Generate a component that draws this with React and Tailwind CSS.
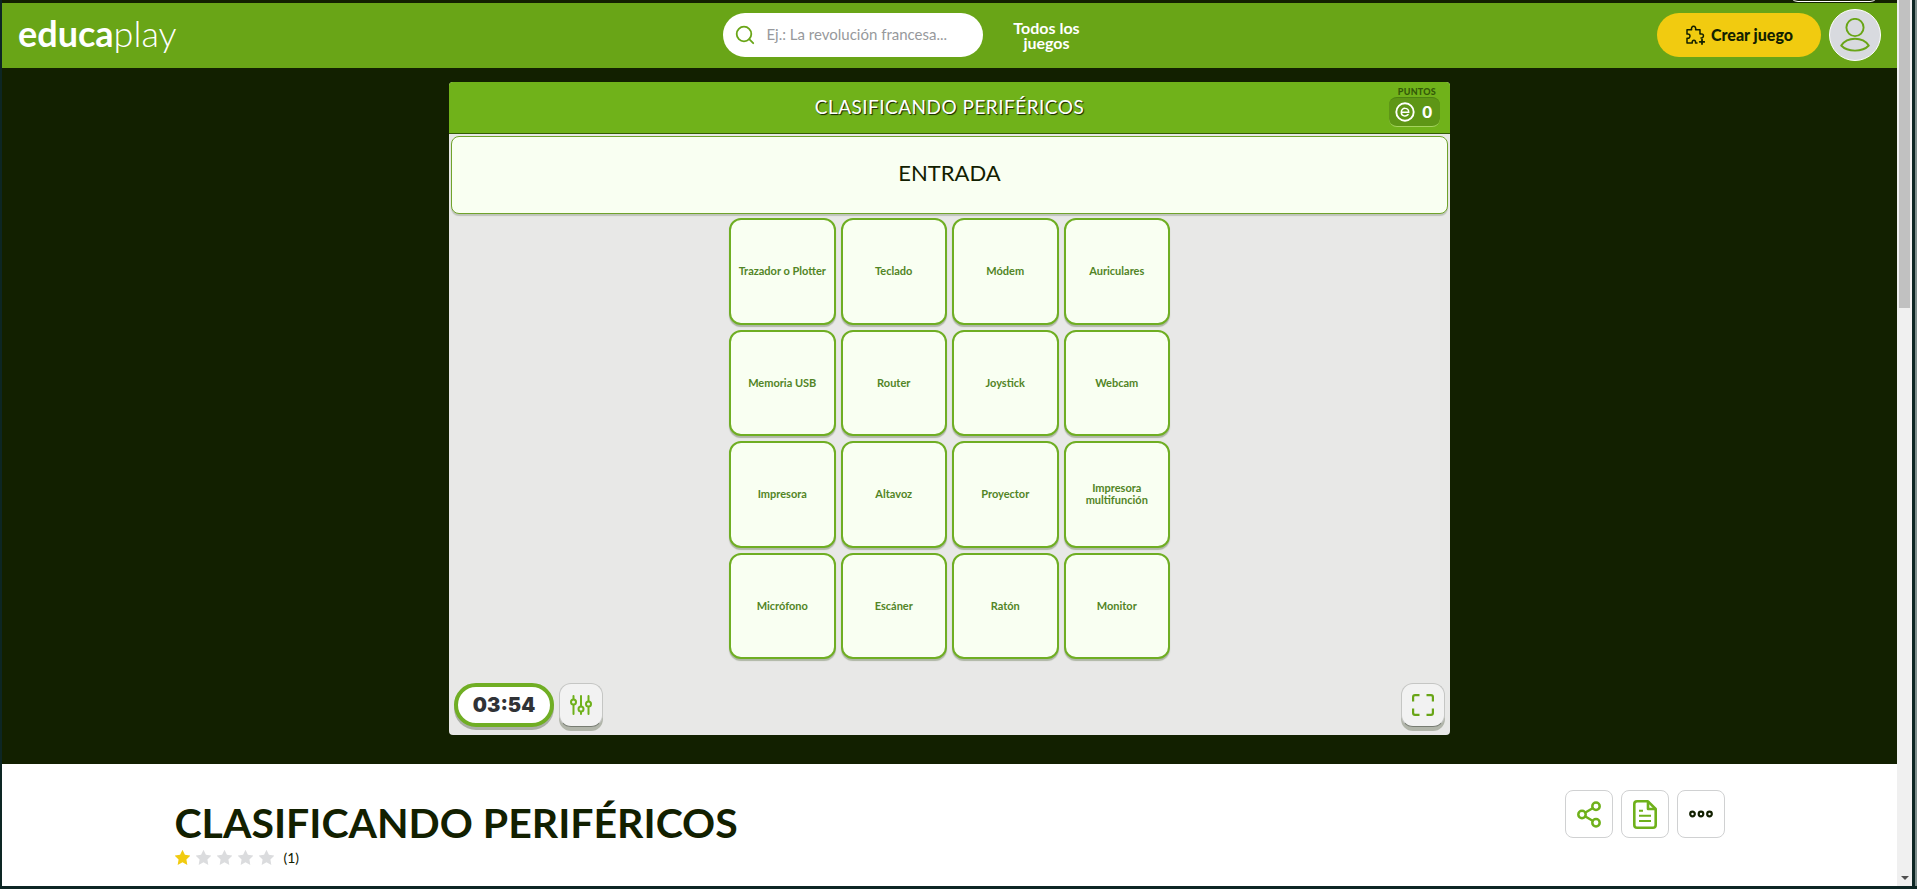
const tiles = [
  "Trazador o Plotter", "Teclado", "Módem", "Auriculares",
  "Memoria USB", "Router", "Joystick", "Webcam",
  "Impresora", "Altavoz", "Proyector", "Impresora multifunción",
  "Micrófono", "Escáner", "Ratón", "Monitor",
];

function SearchIcon() {
  return (
    <svg className="size-5 shrink-0" viewBox="0 0 20 20" fill="none" stroke="#69a517" strokeWidth="1.800" strokeLinecap="round" aria-hidden="true">
      <circle cx="9" cy="9" r="7.300" />
      <path d="M14.200 14.200l4 4" />
    </svg>
  );
}

function PuzzleIcon() {
  return (
    <svg className="size-5 shrink-0" viewBox="0 0 20 20" fill="none" stroke="#122000" strokeWidth="1.500" strokeLinejoin="round" strokeLinecap="round" aria-hidden="true">
      <path d="M12 18h-1.500c1-3.600-4.200-3.600-3.200 0H2v-4.800c4 1 4-5.200 0-4.200V4.800h4.600C5.400.2 11.800.2 10.600 4.800H15v4.300c4.400-1.200 4.400 4 1 4" />
      <path d="M17 14.500v4.600M14.700 16.800h4.600" strokeWidth="1.800" />
    </svg>
  );
}

function UserIcon() {
  return (
    <svg className="h-[34px] w-[30px]" viewBox="0 0 30 34" fill="none" stroke="#69a517" strokeWidth="1.900" aria-hidden="true">
      <circle cx="15" cy="9.500" r="8.600" />
      <path d="M1.200 27.500C7.500 18.500 22.500 18.500 28.800 27.500 22.500 34.300 7.500 34.300 1.200 27.500z" strokeLinejoin="round" />
    </svg>
  );
}

function CoinIcon() {
  return (
    <svg className="size-5" viewBox="0 0 20 20" fill="none" stroke="#fff" aria-hidden="true">
      <circle cx="10" cy="10" r="8.700" strokeWidth="1.900" />
      <path d="M6.500 10.200h7.200c0-5-7.400-5.200-7.400 0 0 4.300 4.800 4.700 6.800 2.400" strokeWidth="1.500" strokeLinecap="round" />
    </svg>
  );
}

function SlidersIcon() {
  return (
    <svg className="h-5 w-[22px]" viewBox="0 0 22 20" fill="none" stroke="#6fb11b" strokeWidth="2" strokeLinecap="round" aria-hidden="true">
      <path d="M3.500 1v3M3.500 10v9M11 1v10M11 17v2M18.500 1v5M18.500 12v7" />
      <circle cx="3.500" cy="7" r="2.500" />
      <circle cx="11" cy="14" r="2.500" />
      <circle cx="18.500" cy="9" r="2.500" />
    </svg>
  );
}

function ExpandIcon() {
  return (
    <svg className="size-[22px]" viewBox="0 0 22 22" fill="none" stroke="#69a517" strokeWidth="2.200" aria-hidden="true">
      <path d="M1.100 7.500V3q0-1.900 1.900-1.900h4.500M14.500 1.100H19q1.900 0 1.900 1.900v4.500M20.900 14.500V19q0 1.900-1.900 1.900h-4.500M7.500 20.900H3q-1.900 0-1.900-1.900v-4.500" />
    </svg>
  );
}

function ShareIcon() {
  return (
    <svg className="h-[27px] w-6" viewBox="0 0 24 27" fill="none" stroke="#6fb11b" strokeWidth="2.500" aria-hidden="true">
      <circle cx="5" cy="13.500" r="3.700" />
      <circle cx="19" cy="5.200" r="3.700" />
      <circle cx="19" cy="21.800" r="3.700" />
      <path d="M8.400 11.500l7.200-4.300M8.400 15.500l7.200 4.300" />
    </svg>
  );
}

function DocumentIcon() {
  return (
    <svg className="h-[29px] w-6" viewBox="0 0 24 29" fill="none" stroke="#6fb11b" strokeWidth="2.600" strokeLinejoin="round" aria-hidden="true">
      <path d="M15 1.300H4.100q-2.800 0-2.800 2.800v20.800q0 2.800 2.800 2.800h15.800q2.800 0 2.800-2.800V9z" />
      <path d="M15 1.300V9h7.700" />
      <path d="M6 10.700h4M6 15.700h12M6 21h12" strokeWidth="2" />
    </svg>
  );
}

function DotsIcon() {
  return (
    <svg className="h-2 w-6" viewBox="0 0 24 8" fill="none" stroke="#122000" strokeWidth="2.200" aria-hidden="true">
      <circle cx="3.500" cy="4" r="2.300" />
      <circle cx="12" cy="4" r="2.300" />
      <circle cx="20.500" cy="4" r="2.300" />
    </svg>
  );
}

function Star({ filled }) {
  return (
    <svg className={filled ? "size-[15px] text-[#f1cb10]" : "size-[15px] text-[#dbdcde]"} viewBox="1 1 18 18" fill="currentColor" aria-hidden="true">
      <path d="M10 .8l2.900 6 6.500.9-4.700 4.600 1.100 6.600L10 15.800l-5.800 3.100 1.100-6.600L.6 7.700l6.500-.9z" />
    </svg>
  );
}

function Header() {
  return (
    <header className="flex h-[65px] items-center bg-[#69a517] px-4 pb-0.5">
      <div className="flex flex-1 pb-1">
        <a href="#inicio" className="text-[36px] leading-10 font-bold text-white">
          educa<span className="font-light">play</span>
        </a>
      </div>
      <div className="flex items-center gap-6 pr-[90px]">
        <label className="flex h-11 w-[260px] items-center gap-3 rounded-full bg-white pl-3">
          <SearchIcon />
          <input aria-label="Buscar juegos" placeholder="Ej.: La revolución francesa..." className="w-52 bg-transparent text-[15px] outline-none placeholder:text-[#97999c]" />
        </label>
        <a href="#juegos" className="w-20 text-center text-[16px] leading-[15px] font-bold text-white">Todos los juegos</a>
      </div>
      <div className="flex flex-1 items-center justify-end gap-2">
        <button className="flex h-11 w-[164px] items-center justify-center gap-1.5 rounded-full bg-[#f1cb10] text-[16px] font-black text-[#122000]">
          <PuzzleIcon />
          Crear juego
        </button>
        <button aria-label="Mi cuenta" className="flex size-[52px] items-center justify-center rounded-full border border-white bg-[#d8dadf]">
          <UserIcon />
        </button>
      </div>
    </header>
  );
}

function Game() {
  return (
    <section className="flex h-[653px] w-full max-w-[1001px] flex-col overflow-hidden rounded bg-[#e8e8e7]">
      <div className="grid h-[52px] shrink-0 grid-cols-[1fr_auto_1fr] items-center border-b border-[#345a08] bg-[#70b21a] px-2.5">
        <h2 className="col-start-2 text-[19px] tracking-wide text-white [text-shadow:1px_1px_1px_#122000]">CLASIFICANDO PERIFÉRICOS</h2>
        <div className="flex flex-col items-end pb-0.5">
          <span className="pr-1 text-[9px] leading-[10px] font-black tracking-wide text-[#345a08]">PUNTOS</span>
          <div className="flex h-[30px] w-[51px] items-center justify-between rounded-lg border-t border-b border-t-[#4d8212] border-b-[#a5d35f] bg-[#5e9616] px-1.5 pr-2 text-[17px] font-black text-white">
            <CoinIcon />
            <span>0</span>
          </div>
        </div>
      </div>
      <div className="mx-0.5 mt-0.5 flex h-[78px] shrink-0 items-center justify-center rounded-lg border border-[#70a32c] bg-[#f9fff2] pb-1.5 text-[22px] text-[#122000] shadow-[0_2px_1px_#bfc4bb]">
        ENTRADA
      </div>
      <div className="mx-auto mt-1 grid w-[441px] grid-cols-4 gap-[5px]">
        {tiles.map((t) => (
          <button key={t} className="flex aspect-square items-center justify-center rounded-xl border-2 border-[#6fae23] bg-[#f9fff2] px-1 text-center text-[11px] leading-3 font-bold text-[#528526] shadow-[0_2px_1px_#aeb6a5]">
            {t}
          </button>
        ))}
      </div>
      <div className="mt-auto flex items-center gap-[5px] px-[5px] pb-2">
        <div className="flex h-11 w-[100px] items-center justify-center rounded-full border-4 border-[#70ae24] bg-white font-[Inter] text-[20px] font-black text-[#303236] shadow-[0_3px_0_#aaafa5]">03:54</div>
        <button aria-label="Ajustes" className="flex size-11 items-center justify-center rounded-xl border border-[#c5c6c4] border-b-[#777c72] bg-[#f2f2f2] shadow-[0_4px_0_#b1b5aa]">
          <SlidersIcon />
        </button>
        <button aria-label="Pantalla completa" className="ml-auto flex size-11 items-center justify-center rounded-xl border border-[#c5c6c4] border-b-[#777c72] bg-[#f2f2f2] shadow-[0_4px_0_#b1b5aa]">
          <ExpandIcon />
        </button>
      </div>
    </section>
  );
}

const action = "flex size-12 items-center justify-center rounded-lg border border-[#d0d1d2] bg-white";

export default function App() {
  return (
    <div className="flex h-screen overflow-hidden border-b-3 border-l-2 border-[#0d2624] bg-white font-[Lato,'Noto_Sans',sans-serif]">
      <div className="flex min-w-0 flex-1 flex-col">
        <div className="flex h-[3px] shrink-0 justify-end overflow-hidden bg-[#122000] pr-[18px]">
          <div className="-mt-4 h-[18px] w-[90px] rounded-xl border border-white" />
        </div>
        <Header />
        <main className="flex flex-1 flex-col">
          <div className="flex justify-center bg-[#122000] pt-3.5 pb-[29px]">
            <Game />
          </div>
          <div className="mx-auto flex w-full max-w-[1550px] items-start justify-between">
            <div className="pt-8">
              <h1 className="text-[41px] leading-[54px] font-bold text-[#122000]">CLASIFICANDO PERIFÉRICOS</h1>
              <div className="flex items-center gap-1.5 leading-3">
                {[1, 2, 3, 4, 5].map((n) => (
                  <Star key={n} filled={n === 1} />
                ))}
                <span className="pl-1 text-[14px] text-[#122000]">(1)</span>
              </div>
            </div>
            <div className="flex gap-2 pt-[26px]">
              <button aria-label="Compartir" className={action}><ShareIcon /></button>
              <button aria-label="Documento" className={action}><DocumentIcon /></button>
              <button aria-label="Más opciones" className={action}><DotsIcon /></button>
            </div>
          </div>
        </main>
      </div>
      <div className="flex w-[15px] shrink-0 flex-col items-center justify-between bg-[#f0f0f0] pb-1.5" aria-hidden="true">
        <div className="h-[308px] w-[11px] bg-[#c1c1c1]" />
        <svg className="h-1 w-2" viewBox="0 0 8 4" fill="#505050"><path d="M0 0h8L4 4z" /></svg>
      </div>
      <div className="w-[5px] shrink-0 border-r-2 border-[#7f8f8d] bg-[#0d2624]" />
    </div>
  );
}
